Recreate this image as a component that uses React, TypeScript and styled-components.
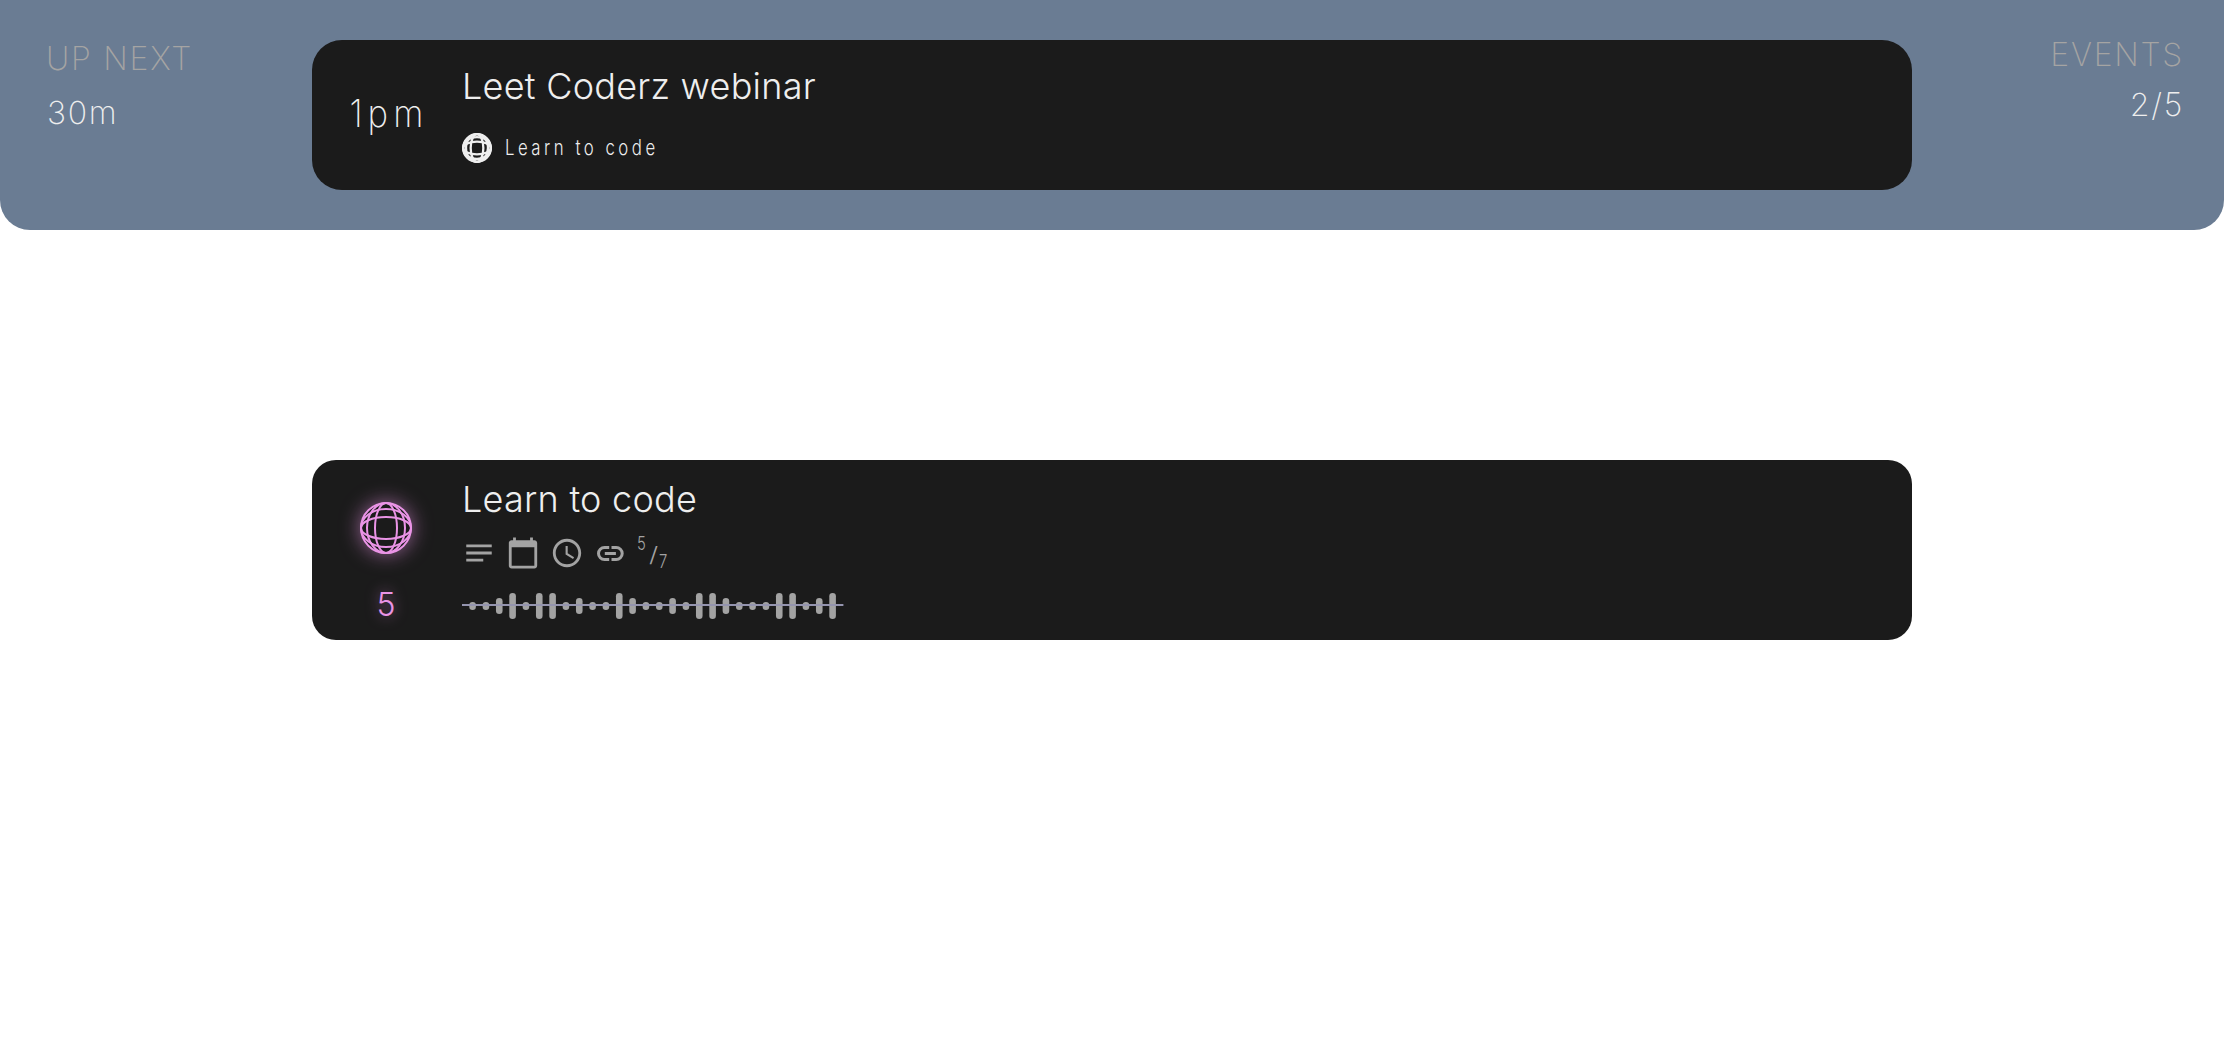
import React from "react";
import styled, { createGlobalStyle } from "styled-components";
import { MdNotes, MdCalendarToday, MdSchedule } from "react-icons/md";

const GlobalStyle = createGlobalStyle`
  *, *::before, *::after { box-sizing: border-box; }
  body {
    margin: 0;
    background: #fff;
    color: #eee;
    font-family: Inter, "Liberation Sans", sans-serif;
  }
`;

const Page = styled.main`
  min-height: 1050px;
  display: flex;
  flex-direction: column;
  align-items: center;
  gap: 230px;
`;

const Header = styled.header`
  width: 100%;
  height: 230px;
  display: grid;
  grid-template-columns: 1fr 1600px 1fr;
  align-items: start;
  background: #6a7c93;
  border-radius: 0 0 30px 30px;
`;

const Stat = styled.div<{ $end?: boolean }>`
  display: flex;
  flex-direction: column;
  padding: ${(p) => (p.$end ? "30px 40px 0 0" : "32px 0 0 46px")};
  text-align: ${(p) => (p.$end ? "right" : "left")};
  font-size: 32px;
  line-height: ${(p) => (p.$end ? 50 : 54)}px;
  letter-spacing: 1.75px;
`;

const StatLabel = styled.span`
  color: #a5a4a3;
  font-weight: 250;
`;

const StatValue = styled.span<{ $indent?: number }>`
  padding-left: ${(p) => p.$indent || 0}px;
  font-weight: 250;
`;

const Card = styled.section<{ $height: number; $radius: number }>`
  width: 1600px;
  height: ${(p) => p.$height}px;
  display: grid;
  grid-template-columns: 150px 1fr;
  background: #1b1b1b;
  border-radius: ${(p) => p.$radius}px;
`;

const EventCard = styled(Card)`
  margin-top: 40px;
`;

const Time = styled.time`
  align-self: center;
  justify-self: center;
  margin: 0 0 5px 3px;
  font-size: 38.5px;
  font-weight: 250;
  line-height: 60px;
  letter-spacing: 5.6px;
  transform: scaleX(0.9);
`;

const EventBody = styled.div`
  display: flex;
  flex-direction: column;
  gap: 25px;
  padding-top: 24px;
`;

const Title = styled.h2`
  margin: 0;
  font-size: 36px;
  font-weight: 320;
  line-height: 44px;
  letter-spacing: 0.25px;
`;

const Source = styled.div`
  height: 30px;
  display: flex;
  align-items: center;
  gap: 13px;
`;

const SourceName = styled.span`
  font-size: 21.5px;
  font-weight: 280;
  line-height: 28px;
  letter-spacing: 4.5px;
  margin-bottom: 2px;
  transform: scaleX(0.78);
  transform-origin: left center;
`;

const Side = styled.div`
  width: 148px;
  display: flex;
  flex-direction: column;
  align-items: center;
  padding-top: 42px;
  color: #ea94e6;
`;

const Glow = styled.span`
  display: flex;
  border-radius: 50%;
  box-shadow: 0 0 20px rgba(234, 148, 230, 0.6);
`;

const Count = styled.span`
  margin-top: 29px;
  font-size: 32px;
  font-weight: 260;
  line-height: 44px;
  text-shadow: 0 0 14px rgba(234, 148, 230, 0.6);
`;

const HabitBody = styled.div`
  display: flex;
  flex-direction: column;
  padding-top: 17px;
`;

const Meta = styled.div`
  height: 36px;
  margin-top: 14px;
  display: flex;
  align-items: center;
  gap: 10px;
  color: #a3a3a3;

  & > svg { flex: none; }
`;

const LinkBox = styled.span`
  width: 32px;
  display: flex;
  justify-content: center;
`;

const Fraction = styled.span`
  display: flex;
  align-items: center;
  height: 36px;
  padding-left: 1px;
  font-weight: 270;
  line-height: 20px;
`;

const Part = styled.span<{ $shift: number; $width: number; $size?: number; $scale?: number }>`
  width: ${(p) => p.$width}px;
  font-size: ${(p) => p.$size || 19}px;
  margin-top: ${(p) => p.$shift}px;
  transform: scaleX(${(p) => p.$scale || 0.78});
  transform-origin: left center;
`;

const Wave = styled.svg`
  display: block;
  margin-top: 18px;
`;

function Globe({ size, stroke }: { size: number; stroke: number }) {
  const r = 26 - stroke / 2;
  return (
    <svg width={size} height={size} viewBox="-26 -26 52 52" fill="none" stroke="currentColor" strokeWidth={stroke}>
      <circle r={r} />
      <ellipse rx="11" ry={r} />
      <ellipse rx="19" ry={r} />
      <ellipse rx={r} ry="11" />
      <ellipse rx={r} ry="19" />
    </svg>
  );
}

function LinkIcon() {
  return (
    <svg width="27" height="15" viewBox="0 0 27 15" fill="none" stroke="currentColor" strokeWidth="3">
      <path d="M12.2 1.5H7.5a6 6 0 0 0 0 12H12.2M14.5 1.5H19.2a6 6 0 0 1 0 12H14.5M7.8 7.5H18.9" />
    </svg>
  );
}

const LEVELS = "ssmlsllsmsslmssmsllmsssllsml".split("");
const HEIGHTS: Record<string, number> = { s: 8, m: 16, l: 26 };
const STEP = 40 / 3;

function Activity() {
  return (
    <Wave width="382" height="30" viewBox="0 0 382 30">
      {LEVELS.map((level, i) => {
        const h = HEIGHTS[level];
        return <rect key={i} x={7.3 + i * STEP} y={17 - h / 2} width="6.6" height={h} rx="3.3" fill="#a3a3a3" />;
      })}
      <rect x="0" y="15" width="381.4" height="2" fill="#9494ae" />
    </Wave>
  );
}

export default function App() {
  return (
    <>
      <GlobalStyle />
      <Page>
        <Header>
          <Stat>
            <StatLabel>UP NEXT</StatLabel>
            <StatValue $indent={1}>30m</StatValue>
          </Stat>
          <EventCard $height={150} $radius={30}>
            <Time>1pm</Time>
            <EventBody>
              <Title>Leet Coderz webinar</Title>
              <Source>
                <Globe size={30} stroke={4} />
                <SourceName>Learn to code</SourceName>
              </Source>
            </EventBody>
          </EventCard>
          <Stat $end>
            <StatLabel>EVENTS</StatLabel>
            <StatValue>2/5</StatValue>
          </Stat>
        </Header>
        <Card $height={180} $radius={24}>
          <Side>
            <Glow><Globe size={52} stroke={2} /></Glow>
            <Count>5</Count>
          </Side>
          <HabitBody>
            <Title>Learn to code</Title>
            <Meta>
              <MdNotes size={34} />
              <MdCalendarToday size={34} />
              <MdSchedule size={34} />
              <LinkBox><LinkIcon /></LinkBox>
              <Fraction>
                <Part $shift={-18} $width={11.5}>5</Part>
                <Part $shift={3} $width={10.5} $size={21} $scale={1.25}>/</Part>
                <Part $shift={18} $width={10}>7</Part>
              </Fraction>
            </Meta>
            <Activity />
          </HabitBody>
        </Card>
      </Page>
    </>
  );
}
